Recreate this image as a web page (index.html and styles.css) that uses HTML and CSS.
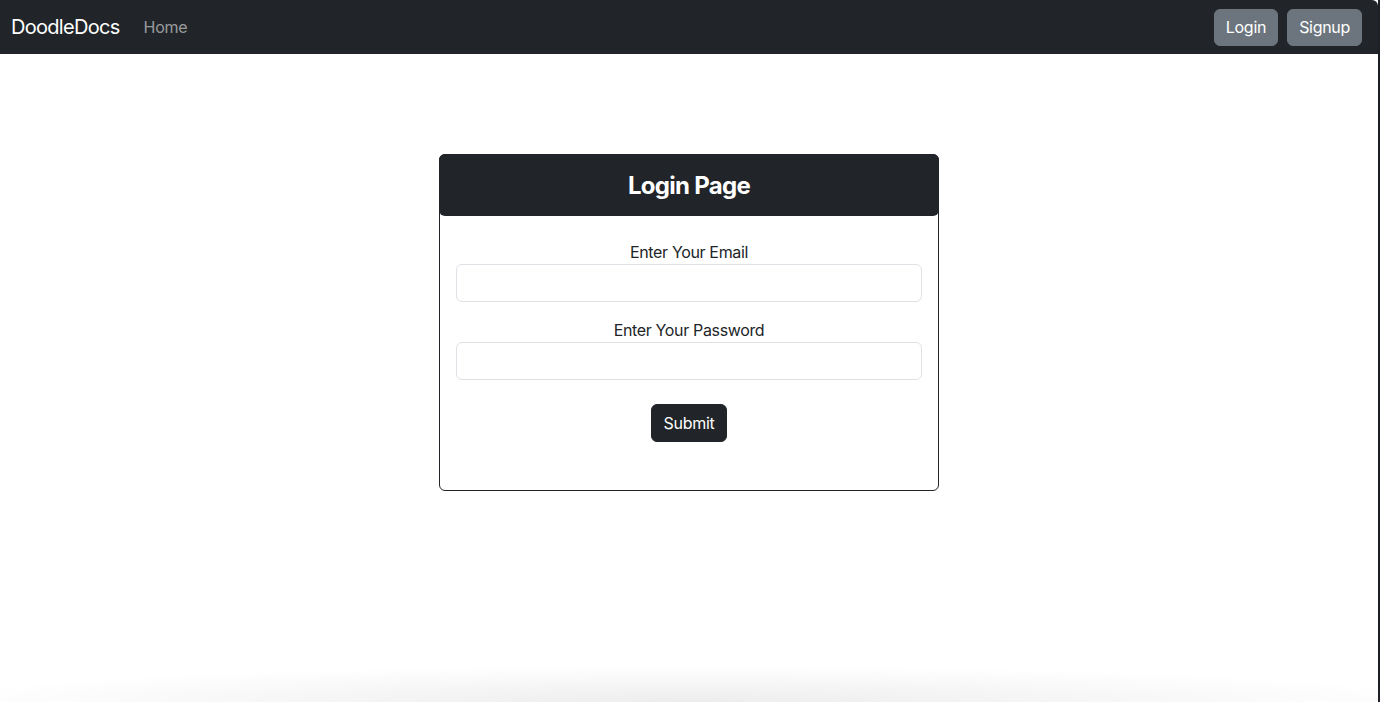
FILE: index.html
```html
<!DOCTYPE html>
<html lang="en">
<head>
<meta charset="utf-8">
<title>DoodleDocs - Login</title>
<link rel="stylesheet" href="styles.css">
</head>
<body>
<div class="window">
  <nav class="navbar">
    <div class="nav-left">
      <a class="brand" href="#">DoodleDocs</a>
      <a class="nav-link" href="#">Home</a>
    </div>
    <div class="nav-right">
      <button class="btn btn-secondary">Login</button>
      <button class="btn btn-secondary">Signup</button>
    </div>
  </nav>
  <main class="main">
    <div class="card">
      <div class="card-header"><h2>Login Page</h2></div>
      <form class="card-body">
        <div class="field">
          <label for="email">Enter Your Email</label>
          <input id="email" type="email">
        </div>
        <div class="field">
          <label for="password">Enter Your Password</label>
          <input id="password" type="password">
        </div>
        <button type="button" class="btn btn-dark">Submit</button>
      </form>
    </div>
  </main>
</div>
<div class="bottom-shadow"></div>
</body>
</html>
```
FILE: styles.css
```css
* { box-sizing: border-box; }
html, body { margin: 0; height: 100%; }
body {
  font-family: Inter, "Noto Sans", "Liberation Sans", sans-serif;
  color: #212529;
  background: #1c1f26;
  overflow: hidden;
}
.window {
  width: 1378px;
  height: 702px;
  background: #fff;
  display: flex;
  flex-direction: column;
}
.navbar {
  height: 54px;
  background: #212529;
  display: flex;
  align-items: center;
  justify-content: space-between;
  padding: 0 16px 0 11px;
  border-top-right-radius: 6px;
}
.nav-left { display: flex; align-items: center; gap: 24px; }
.brand {
  color: #fff;
  text-decoration: none;
  font-size: 20px;
  letter-spacing: -0.7px;
}
.nav-link {
  color: rgba(255,255,255,0.55);
  text-decoration: none;
  font-size: 16px;
  letter-spacing: -0.3px;
}
.nav-right { display: flex; gap: 9px; }
.btn {
  font-family: inherit;
  font-size: 16px;
  border: 1px solid transparent;
  border-radius: 6px;
  padding: 0 11px;
  height: 37px;
  line-height: 24px;
  cursor: pointer;
  letter-spacing: -0.3px;
}
.btn-secondary { background: #6c757d; color: #fff; border-color: #6c757d; }
.btn-dark { background: #212529; color: #fff; border-color: #212529; height: 38px; }
.main {
  flex: 1;
  display: flex;
  justify-content: center;
  padding-top: 100px;
}
.card {
  width: 500px;
  height: 337px;
  border: 1px solid #212529;
  border-radius: 6px;
  display: flex;
  flex-direction: column;
}
.card-header {
  background: #212529;
  height: 62px;
  margin: -1px -1px 0;
  border-radius: 6px;
  display: flex;
  align-items: center;
  justify-content: center;
}
.card-header h2 {
  margin: 0;
  color: #fff;
  font-size: 24px;
  font-weight: 700;
  letter-spacing: -0.7px;
}
.card-body {
  padding: 24px 16px 16px;
  display: flex;
  flex-direction: column;
  align-items: center;
  gap: 16px;
}
.field { width: 100%; display: flex; flex-direction: column; align-items: center; }
.field label { font-size: 16px; line-height: 24px; letter-spacing: -0.35px; }
.field input {
  width: 100%;
  height: 38px;
  border: 1px solid #dee2e6;
  border-radius: 6px;
  font-size: 16px;
  padding: 6px 12px;
  background: #fff;
}
.card-body .btn-dark { margin-top: 8px; padding: 0 12px; }
.bottom-shadow {
  position: fixed;
  left: 0;
  bottom: 0;
  width: 1378px;
  height: 36px;
  pointer-events: none;
  background: radial-gradient(ellipse 55% 100% at 50% 100%, rgba(0,0,0,0.07), rgba(0,0,0,0) 100%);
}
```
